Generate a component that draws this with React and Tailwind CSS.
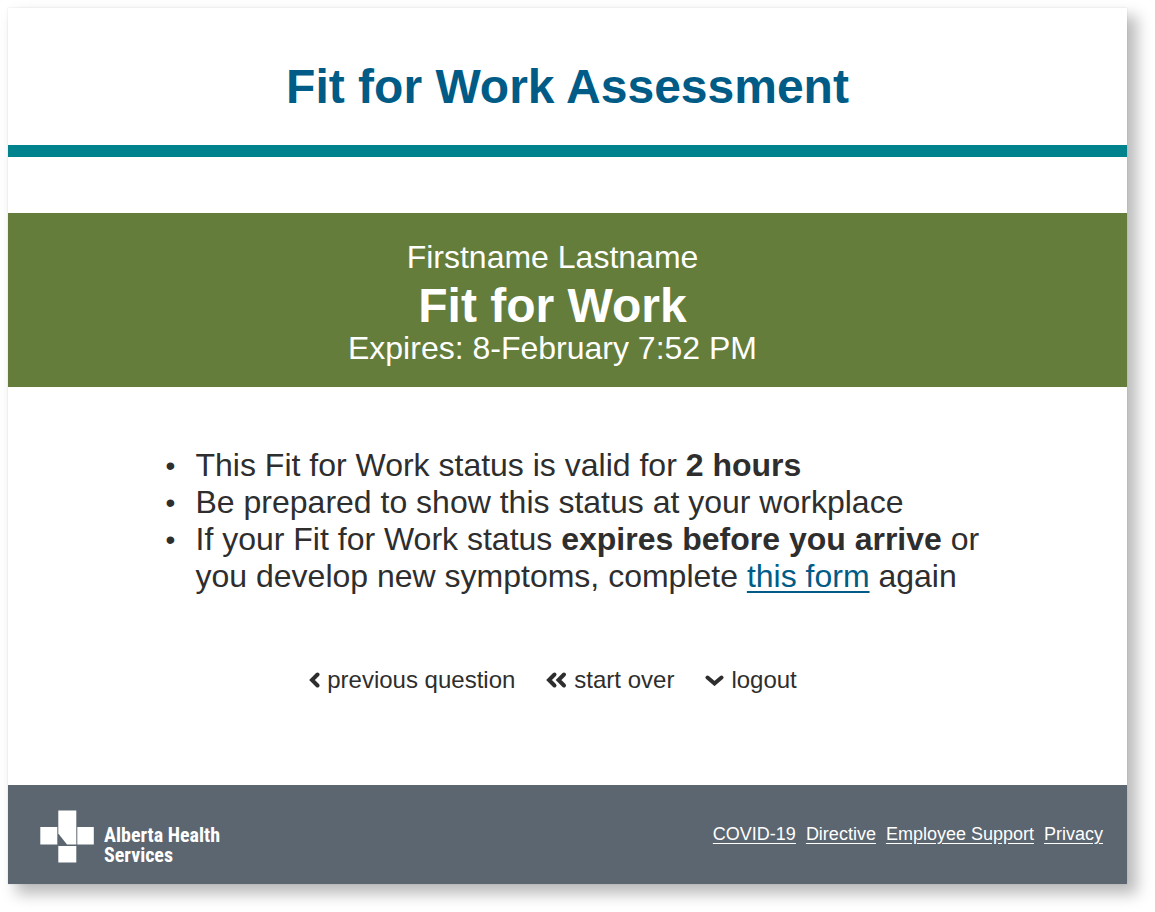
const footerLinks = ["COVID-19", "Directive", "Employee Support", "Privacy"];

function Logo() {
  return (
    <div className="flex items-start gap-2.5">
      <svg viewBox="0 0 54 53" className="h-[53px] w-[54px]" fill="currentColor" aria-hidden="true">
        <path d="M18.3 0.5h18v34h-9.3L18.3 23.5z" />
        <path d="M0.3 17h17v17.5H0.3z" />
        <path d="M37.3 17h16.5v17.5H37.3z" />
        <path d="M18.3 36h18v16.5H18.3z" />
      </svg>
      <div className="pt-[15px] font-['Roboto_Condensed','Noto_Sans',sans-serif] text-[20px] leading-5 font-bold">
        Alberta Health
        <br />
        Services
      </div>
    </div>
  );
}

function StrokeIcon({ width, height, d }) {
  return (
    <svg
      width={width}
      height={height}
      viewBox={`0 0 ${width} ${height}`}
      fill="none"
      stroke="currentColor"
      strokeWidth="4"
      strokeLinecap="round"
      aria-hidden="true"
    >
      <path d={d} />
    </svg>
  );
}

function NavButton({ icon, children }) {
  return (
    <button type="button" className="flex items-center gap-[7px] text-2xl leading-7">
      {icon}
      {children}
    </button>
  );
}

export default function App() {
  return (
    <div className="min-h-screen bg-white pt-2 pr-7 pb-7 pl-2 font-['Liberation_Sans',Arial,sans-serif] text-[#2e2e2e]">
      <div className="bg-white shadow-[9px_9px_14px_1px_rgba(0,0,0,0.27),0_0_2px_rgba(0,0,0,0.1)]">
        <header className="border-b-12 border-[#00838c] pt-[51px] pb-[30px] text-center">
          <h1 className="text-5xl leading-14 font-bold text-[#005c86]">Fit for Work Assessment</h1>
        </header>

        <main className="pt-14">
          <section className="bg-[#647d3a] pt-[26px] pr-[30px] pb-5 text-center text-[32px] leading-[37px] text-white">
            <p>Firstname Lastname</p>
            <h2 className="pt-1.5 text-5xl leading-12 font-bold">Fit for Work</h2>
            <p>Expires: 8-February 7:52 PM</p>
          </section>

          <div className="pt-[60px] pl-[26px]">
            <ul className="mx-auto w-full max-w-[830px] list-none text-[32px] leading-[37px]">
              {[
                <>This Fit for Work status is valid for <b>2 hours</b></>,
                <>Be prepared to show this status at your workplace</>,
                <>
                  If your Fit for Work status <b>expires before you arrive</b> or you develop new symptoms, complete{" "}
                  <a href="#form" className="text-[#005c86] underline decoration-2 underline-offset-4">this form</a> again
                </>,
              ].map((item, i) => (
                <li key={i} className="flex">
                  <span className="w-[30px] shrink-0 text-[28px]" aria-hidden="true">•</span>
                  <span>{item}</span>
                </li>
              ))}
            </ul>
          </div>

          <nav className="flex justify-center gap-[31px] pt-[71px] pr-[30px] pb-[91px]">
            <NavButton icon={<StrokeIcon width={12} height={18} d="M9.5 3.5L4 9l5.500 5.500" />}>previous question</NavButton>
            <NavButton icon={<StrokeIcon width={21} height={18} d="M8.500 3.500L3 9l5.500 5.500M18 3.500L12.500 9l5.500 5.500" />}>start over</NavButton>
            <NavButton icon={<StrokeIcon width={19} height={12} d="M2.500 3.500l7 6 7-6" />}>logout</NavButton>
          </nav>
        </main>

        <footer className="flex items-start justify-between bg-[#5c6670] pt-[25px] pr-6 pb-[19px] pl-8 text-white">
          <Logo />
          <nav className="flex gap-2.5 pt-3 text-lg leading-6">
            {footerLinks.map((label) => (
              <a key={label} href="#footer" className="underline underline-offset-3">{label}</a>
            ))}
          </nav>
        </footer>
      </div>
    </div>
  );
}
